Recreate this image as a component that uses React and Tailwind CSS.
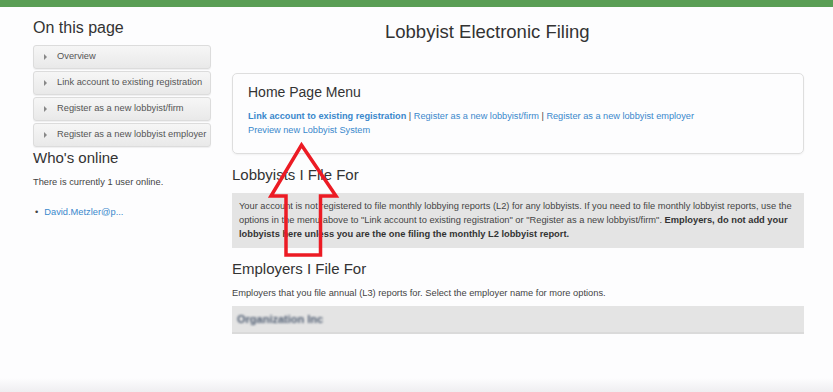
const sideLinks = [
  'Overview',
  'Link account to existing registration',
  'Register as a new lobbyist/firm',
  'Register as a new lobbyist employer',
];

function Sidebar() {
  return (
    <aside className="w-[178px] shrink-0">
      <h2 className="mt-[11px] mb-[7px] text-[16px] leading-[20px] text-[#333]">On this page</h2>
      <ul>
        {sideLinks.map(l => (
          <li key={l} className="mb-[2px] flex h-[24px] items-center rounded-[3px] border border-[#dcdcdc] bg-gradient-to-b from-[#f6f6f6] to-[#e9e9e9] shadow-[0_1px_1px_rgba(0,0,0,0.06)]">
            <span className="ml-[10px] h-0 w-0 border-y-[3px] border-l-[3px] border-y-transparent border-l-[#888]" />
            <span className="ml-[10px] text-[9.3px] text-[#555]">{l}</span>
          </li>
        ))}
      </ul>
      <h2 className="mt-[1px] text-[15px] leading-[18px] text-[#333]">Who's online</h2>
      <p className="mt-[8px] text-[9.3px] leading-[14px] text-[#444]">There is currently 1 user online.</p>
      <ul className="mt-[16px] pl-[14px]">
        <li className="flex items-center text-[9.3px] leading-[14px]">
          <span className="mr-[6px] -ml-[12px] text-[#444]">•</span>
          <a className="text-[#3a88cc]">David.Metzler@p...</a>
        </li>
      </ul>
    </aside>
  );
}

function Main() {
  return (
    <main className="ml-[21px] w-[572px]">
      <h1 className="mt-[12px] pl-[153px] text-[18.5px] leading-[26px] text-[#333]">Lobbyist Electronic Filing</h1>

      <section className="mt-[28px] rounded-[5px] border border-[#dedede] px-[15px] pt-[9px] pb-[16px] shadow-[0_1px_2px_rgba(0,0,0,0.05)]">
        <h3 className="text-[14px] leading-[18px] text-[#333]">Home Page Menu</h3>
        <div className="mt-[8px] text-[9.2px] leading-[14px] text-[#3a88cc]">
          <a className="font-bold">Link account to existing registration</a>
          <span className="text-[#444]"> | </span>
          <a>Register as a new lobbyist/firm</a>
          <span className="text-[#444]"> | </span>
          <a>Register as a new lobbyist employer</a>
          <br />
          <a>Preview new Lobbyist System</a>
        </div>
      </section>

      <h2 className="mt-[12px] text-[15px] leading-[18px] text-[#333]">Lobbyists I File For</h2>
      <div className="mt-[9px] bg-[#e4e4e4] px-[7px] pt-[6px] pb-[7px] text-[9.3px] leading-[14px] text-[#444]">
        <p className="whitespace-nowrap">Your account is not registered to file monthly lobbying reports (L2) for any lobbyists. If you need to file monthly lobbyist reports, use the</p>
        <p className="whitespace-nowrap">
          options in the menu above to "Link account to existing registration" or "Register as a new lobbyist/firm". <b className="text-[#333]">Employers, do not add your</b>
        </p>
        <p className="whitespace-nowrap">
          <b className="text-[#333]">lobbyists here unless you are the one filing the monthly L2 lobbyist report.</b>
        </p>
      </div>

      <h2 className="mt-[12px] text-[15px] leading-[18px] text-[#333]">Employers I File For</h2>
      <p className="mt-[8px] text-[9.3px] leading-[14px] text-[#444]">Employers that you file annual (L3) reports for. Select the employer name for more options.</p>
      <div className="mt-[6px] flex h-[28px] items-center border-b-2 border-[#dadada] bg-[#e4e4e4] px-[5px]">
        <span className="text-[11px] font-bold text-[#4f5d72] blur-[1.2px]">Organization Inc</span>
      </div>
    </main>
  );
}

export default function App() {
  return (
    <div className="relative flex h-[392px] w-[833px] flex-col overflow-hidden bg-[#fdfdfe] font-['Liberation_Sans',Arial,sans-serif]">
      <div className="h-[7px] bg-[#5a9e55]" />
      <div className="flex pl-[33px]">
        <Sidebar />
        <Main />
      </div>
      <div className="flex-1" />
      <div className="h-[14px] bg-gradient-to-b from-[#fdfdfe] to-[#efeef1]" />

      <svg className="pointer-events-none absolute left-0 top-0" width="833" height="392">
        <polygon
          points="301.5,145 336,196 320.5,196 320.5,255 286,255 286,196 271,196"
          fill="none"
          stroke="#ec1b24"
          strokeWidth="3.5"
          strokeLinejoin="miter"
        />
      </svg>
    </div>
  );
}
